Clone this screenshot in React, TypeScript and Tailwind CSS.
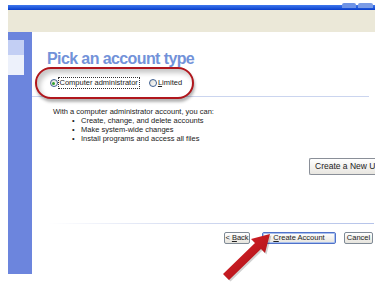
import React from "react";

function Radio({ checked }: { checked?: boolean }) {
  return (
    <span className="flex h-[8px] w-[8px] shrink-0 items-center justify-center rounded-full border border-[#3e5f8f] bg-gradient-to-br from-[#dcdcd4] to-white">
      {checked && <span className="h-[3px] w-[3px] rounded-full bg-[#2fa02f]" />}
    </span>
  );
}

function XpButton({
  children,
  primary,
  className = "",
}: {
  children: React.ReactNode;
  primary?: boolean;
  className?: string;
}) {
  return (
    <button
      className={`flex h-[12px] items-center justify-center rounded-[2px] border bg-gradient-to-b from-white to-[#e6e4dd] text-[7.5px] leading-none text-[#222] ${
        primary ? "border-[#4f72c9] shadow-[inset_0_0_0_1px_#a9c0ee]" : "border-[#7f8a96]"
      } ${className}`}
    >
      {children}
    </button>
  );
}

export default function App() {
  return (
    <div className="relative h-[286px] w-[388px] overflow-hidden bg-white font-['Liberation_Sans',Arial,sans-serif]">
      <div className="ml-2 w-[367px] pt-[5px]">
        {/* title bar */}
        <div className="flex h-[5px] justify-end gap-[2px] bg-gradient-to-b from-[#3f78ee] to-[#0a3dcc] pr-[2px]">
          <div className="-mt-[2px] h-[5px] w-[14px] rounded-t-[2px] bg-[#6e93e6]" />
          <div className="-mt-[2px] h-[5px] w-[15px] rounded-t-[2px] bg-[#7a9be6]" />
        </div>
        <div className="h-[22px] bg-[#ebe8d8]" />

        <div className="flex h-[242px]">
          {/* task pane */}
          <aside className="w-[24px] shrink-0 bg-[#6c85dd] pt-2">
            <div className="mr-2">
              <div className="h-[15px] bg-[#c3cff4]" />
              <div className="h-[20px] bg-[#edf1fb]" />
            </div>
          </aside>

          <main className="flex flex-1 flex-col overflow-hidden bg-white pt-[18px]">
            <h1 className="pl-[15px] text-[16px] font-bold leading-[18px] tracking-[-0.6px] text-[#7292d9]">
              Pick an account type
            </h1>

            <div className="mr-[6px] border-b border-[#cbd5ef]">
              <div className="relative z-10 -mb-[3px] -mt-[1px] ml-[3px] flex h-[32px] w-[159px] items-center rounded-full border-[2.5px] border-[#b0161c] bg-white pl-[12.5px] text-[7.5px] leading-none text-[#222] shadow-[1px_3px_3px_rgba(0,0,0,0.3),inset_3px_4px_5px_rgba(0,0,0,0.22)]">
                <Radio checked />
                <span className="border border-dotted border-[#333] px-[1px] py-[1px]">
                  Computer administrator
                </span>
                <span className="ml-[9px] flex items-center gap-[1px]">
                  <Radio />
                  <span>
                    <span className="underline">L</span>imited
                  </span>
                </span>
              </div>
            </div>

            <div className="mt-[10px] pl-[21px] text-[7.5px] leading-[9px] text-[#222]">
              <p>With a computer administrator account, you can:</p>
              <ul>
                {[
                  "Create, change, and delete accounts",
                  "Make system-wide changes",
                  "Install programs and access all files",
                ].map((t) => (
                  <li key={t} className="flex pl-[19px]">
                    <span className="w-[9px]">•</span>
                    <span>{t}</span>
                  </li>
                ))}
              </ul>
            </div>

            <div className="mt-[15px] flex justify-end">
              <button className="flex h-[17px] w-[66px] items-center overflow-hidden whitespace-nowrap rounded-l-[2px] border border-r-0 border-[#8a8f98] bg-gradient-to-b from-white to-[#e8e6e0] pl-[5px] text-[8.5px] leading-none text-[#222]">
                Create a New U
              </button>
            </div>

            <div className="ml-[16px] mr-[1px] mt-[48px] h-px bg-gradient-to-r from-transparent via-[#cdd6ef] to-[#b6c4ea]" />

            <div className="mr-[2px] mt-[8px] flex justify-end">
              <XpButton className="w-[26px]">
                <span>
                  &lt;&nbsp;<span className="underline">B</span>ack
                </span>
              </XpButton>
              <XpButton primary className="ml-[12px] w-[74px]">
                <span>
                  <span className="underline">C</span>reate Account
                </span>
              </XpButton>
              <XpButton className="ml-[8px] w-[29px]">Cancel</XpButton>
            </div>
          </main>
        </div>
      </div>

      {/* red annotation arrow */}
      <svg
        className="pointer-events-none absolute left-0 top-0"
        width="388"
        height="286"
        viewBox="0 0 388 286"
      >
        <defs>
          <linearGradient id="arr" x1="0" y1="0" x2="1" y2="1">
            <stop offset="0" stopColor="#e0262c" />
            <stop offset="1" stopColor="#a30d14" />
          </linearGradient>
        </defs>
        <polygon
          points="270,234 265,253 261,249 229,280 223,274 255,243 251,239"
          fill="rgba(0,0,0,0.18)"
          transform="translate(1.5,1.5)"
        />
        <polygon
          points="270,234 265,253 261,249 229,280 223,274 255,243 251,239"
          fill="url(#arr)"
        />
      </svg>
    </div>
  );
}
